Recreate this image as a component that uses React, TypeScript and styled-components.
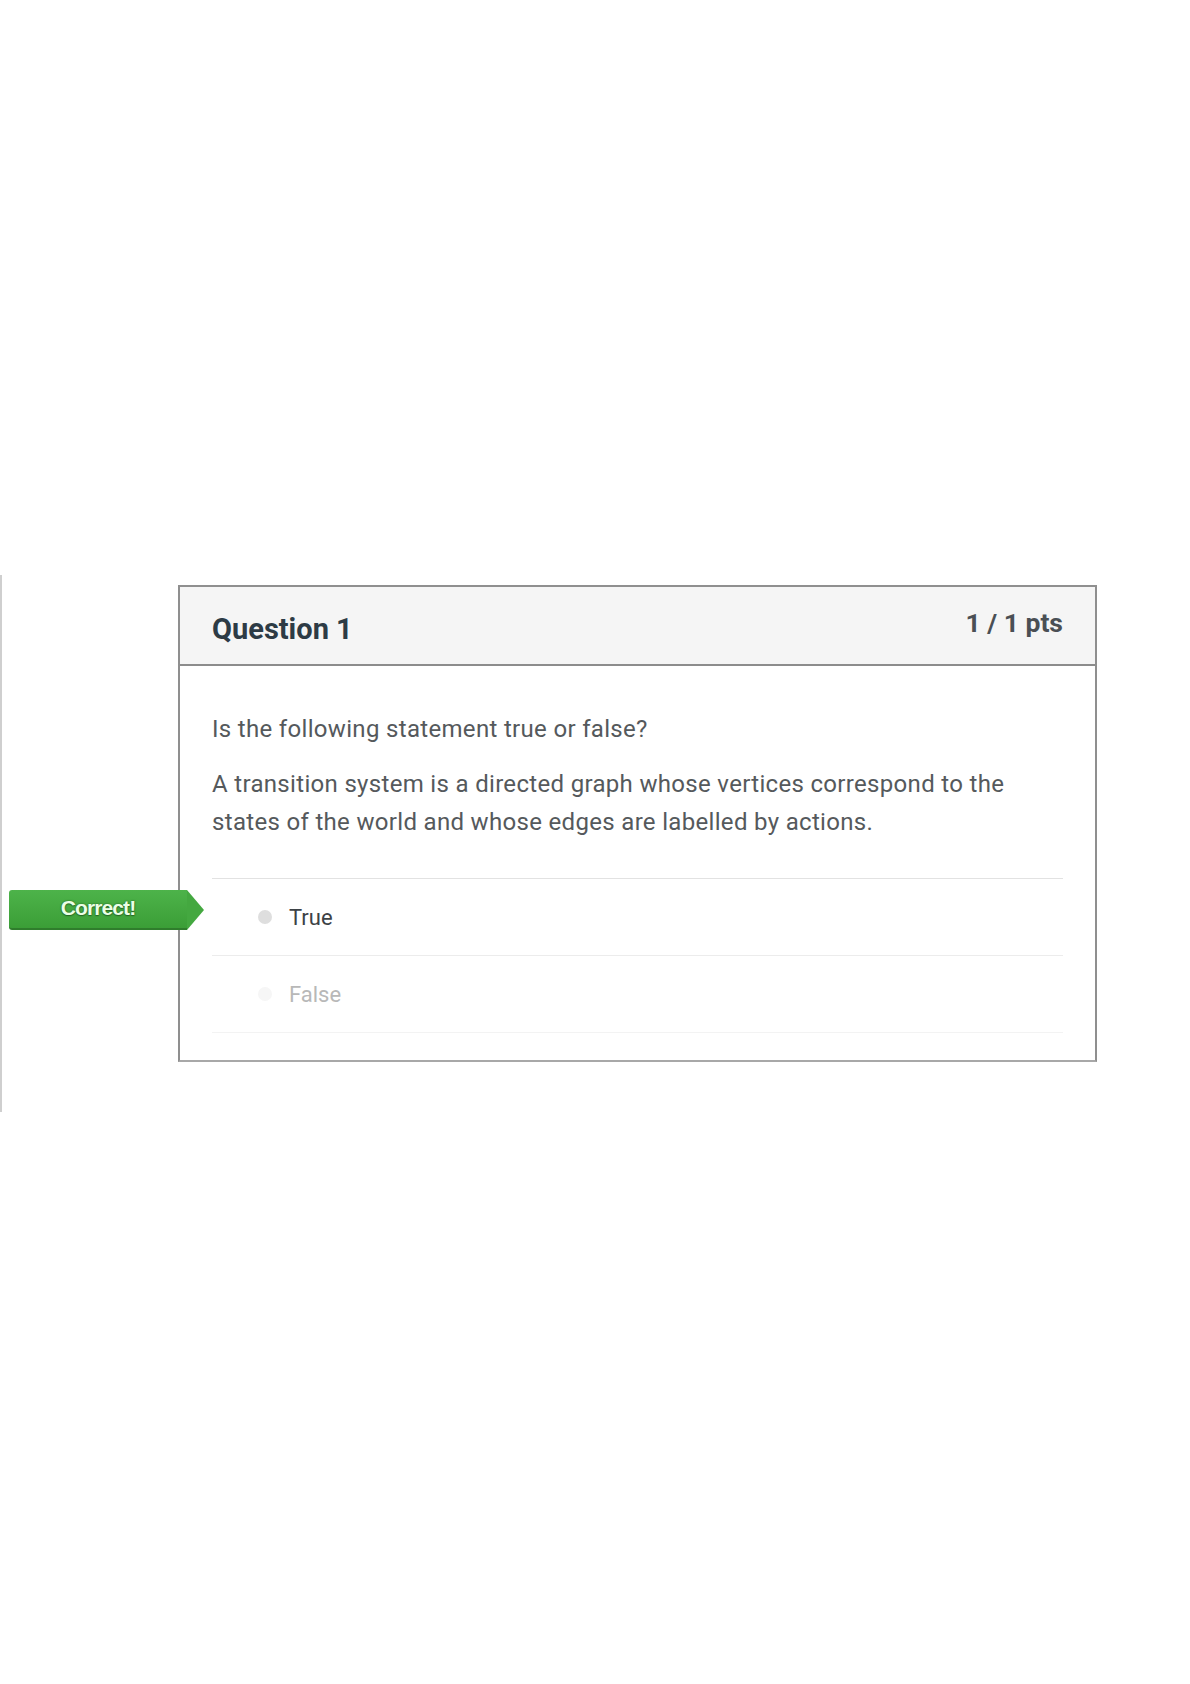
import React from "react";
import styled, { createGlobalStyle } from "styled-components";

const GlobalStyle = createGlobalStyle`
  html, body {
    margin: 0;
    padding: 0;
    background: #ffffff;
  }
  body {
    font-family: Roboto, "Liberation Sans", Arial, sans-serif;
  }
`;

const Page = styled.div`
  width: 1190px;
  min-height: 1684px;
  padding-top: 575px;
  box-sizing: border-box;
`;

const Section = styled.section`
  height: 537px;
  border-left: 2px solid #cfcfcf;
  padding: 10px 0 0 176px;
  box-sizing: border-box;
`;

const Card = styled.div`
  width: 919px;
  height: 477px;
  box-sizing: border-box;
  border: 2px solid #8f8f8f;
  border-bottom-color: #a8a8a8;
  background: #fff;
`;

const Header = styled.header`
  height: 79px;
  box-sizing: border-box;
  display: flex;
  align-items: center;
  justify-content: space-between;
  padding: 0 32px 0 32px;
  background: #f5f5f5;
  border-bottom: 2px solid #8c8c8c;
`;

const Title = styled.h2`
  margin: 6px 0 0;
  font-size: 29px;
  font-weight: 700;
  color: #2d3b45;
`;

const Points = styled.div`
  margin-top: -6px;
  font-size: 26.5px;
  font-weight: 700;
  color: #4a4f54;
`;

const Body = styled.div`
  padding: 44px 32px 0 32px;
`;

const Text = styled.p`
  margin: 0 0 17px;
  font-size: 24px;
  line-height: 38px;
  color: #55595c;
  letter-spacing: 0.32px;
`;

const Answers = styled.div`
  margin-top: 37px;
  border-top: 1px solid #e2e2e2;
`;

const Answer = styled.div<{ $last?: boolean }>`
  position: relative;
  height: 76px;
  display: flex;
  align-items: center;
  padding-left: 46px;
  border-bottom: 1px solid ${(p) => (p.$last ? "#f3f3f3" : "#ececec")};
`;

const Radio = styled.span<{ $checked?: boolean }>`
  width: 14px;
  height: 14px;
  border-radius: 50%;
  background: ${(p) => (p.$checked ? "#dedede" : "#f6f6f6")};
  margin-right: 17px;
`;

const Label = styled.span<{ $muted?: boolean }>`
  font-size: 22px;
  color: ${(p) => (p.$muted ? "#b8b8b8" : "#3d4246")};
`;

const Badge = styled.div`
  position: absolute;
  left: -203px;
  top: 11px;
  width: 178px;
  height: 40px;
  display: flex;
  align-items: center;
  justify-content: center;
  padding-bottom: 2px;
  background: linear-gradient(#4db34a, #3b9e37);
  border-bottom: 2px solid #2f7d2c;
  box-sizing: border-box;
  border-radius: 3px 0 0 3px;
  font-family: "Liberation Sans", Arial, sans-serif;
  font-size: 21px;
  font-weight: 700;
  letter-spacing: -0.9px;
  color: #eaffe6;
  text-shadow: 0 0 2px #1f5c1d, 0 1px 1px #2a6d27;

  &::after {
    content: "";
    position: absolute;
    right: -17px;
    top: 0;
    border-style: solid;
    border-width: 20px 0 20px 17px;
    border-color: transparent transparent transparent #44a840;
  }
`;

export default function App() {
  return (
    <Page>
      <GlobalStyle />
      <Section>
        <Card>
          <Header>
            <Title>Question 1</Title>
            <Points>1 / 1 pts</Points>
          </Header>
          <Body>
            <Text>Is the following statement true or false?</Text>
            <Text>
              A transition system is a directed graph whose vertices correspond to the
              <br />
              states of the world and whose edges are labelled by actions.
            </Text>
            <Answers>
              <Answer>
                <Badge>Correct!</Badge>
                <Radio $checked />
                <Label>True</Label>
              </Answer>
              <Answer $last>
                <Radio />
                <Label $muted>False</Label>
              </Answer>
            </Answers>
          </Body>
        </Card>
      </Section>
    </Page>
  );
}
